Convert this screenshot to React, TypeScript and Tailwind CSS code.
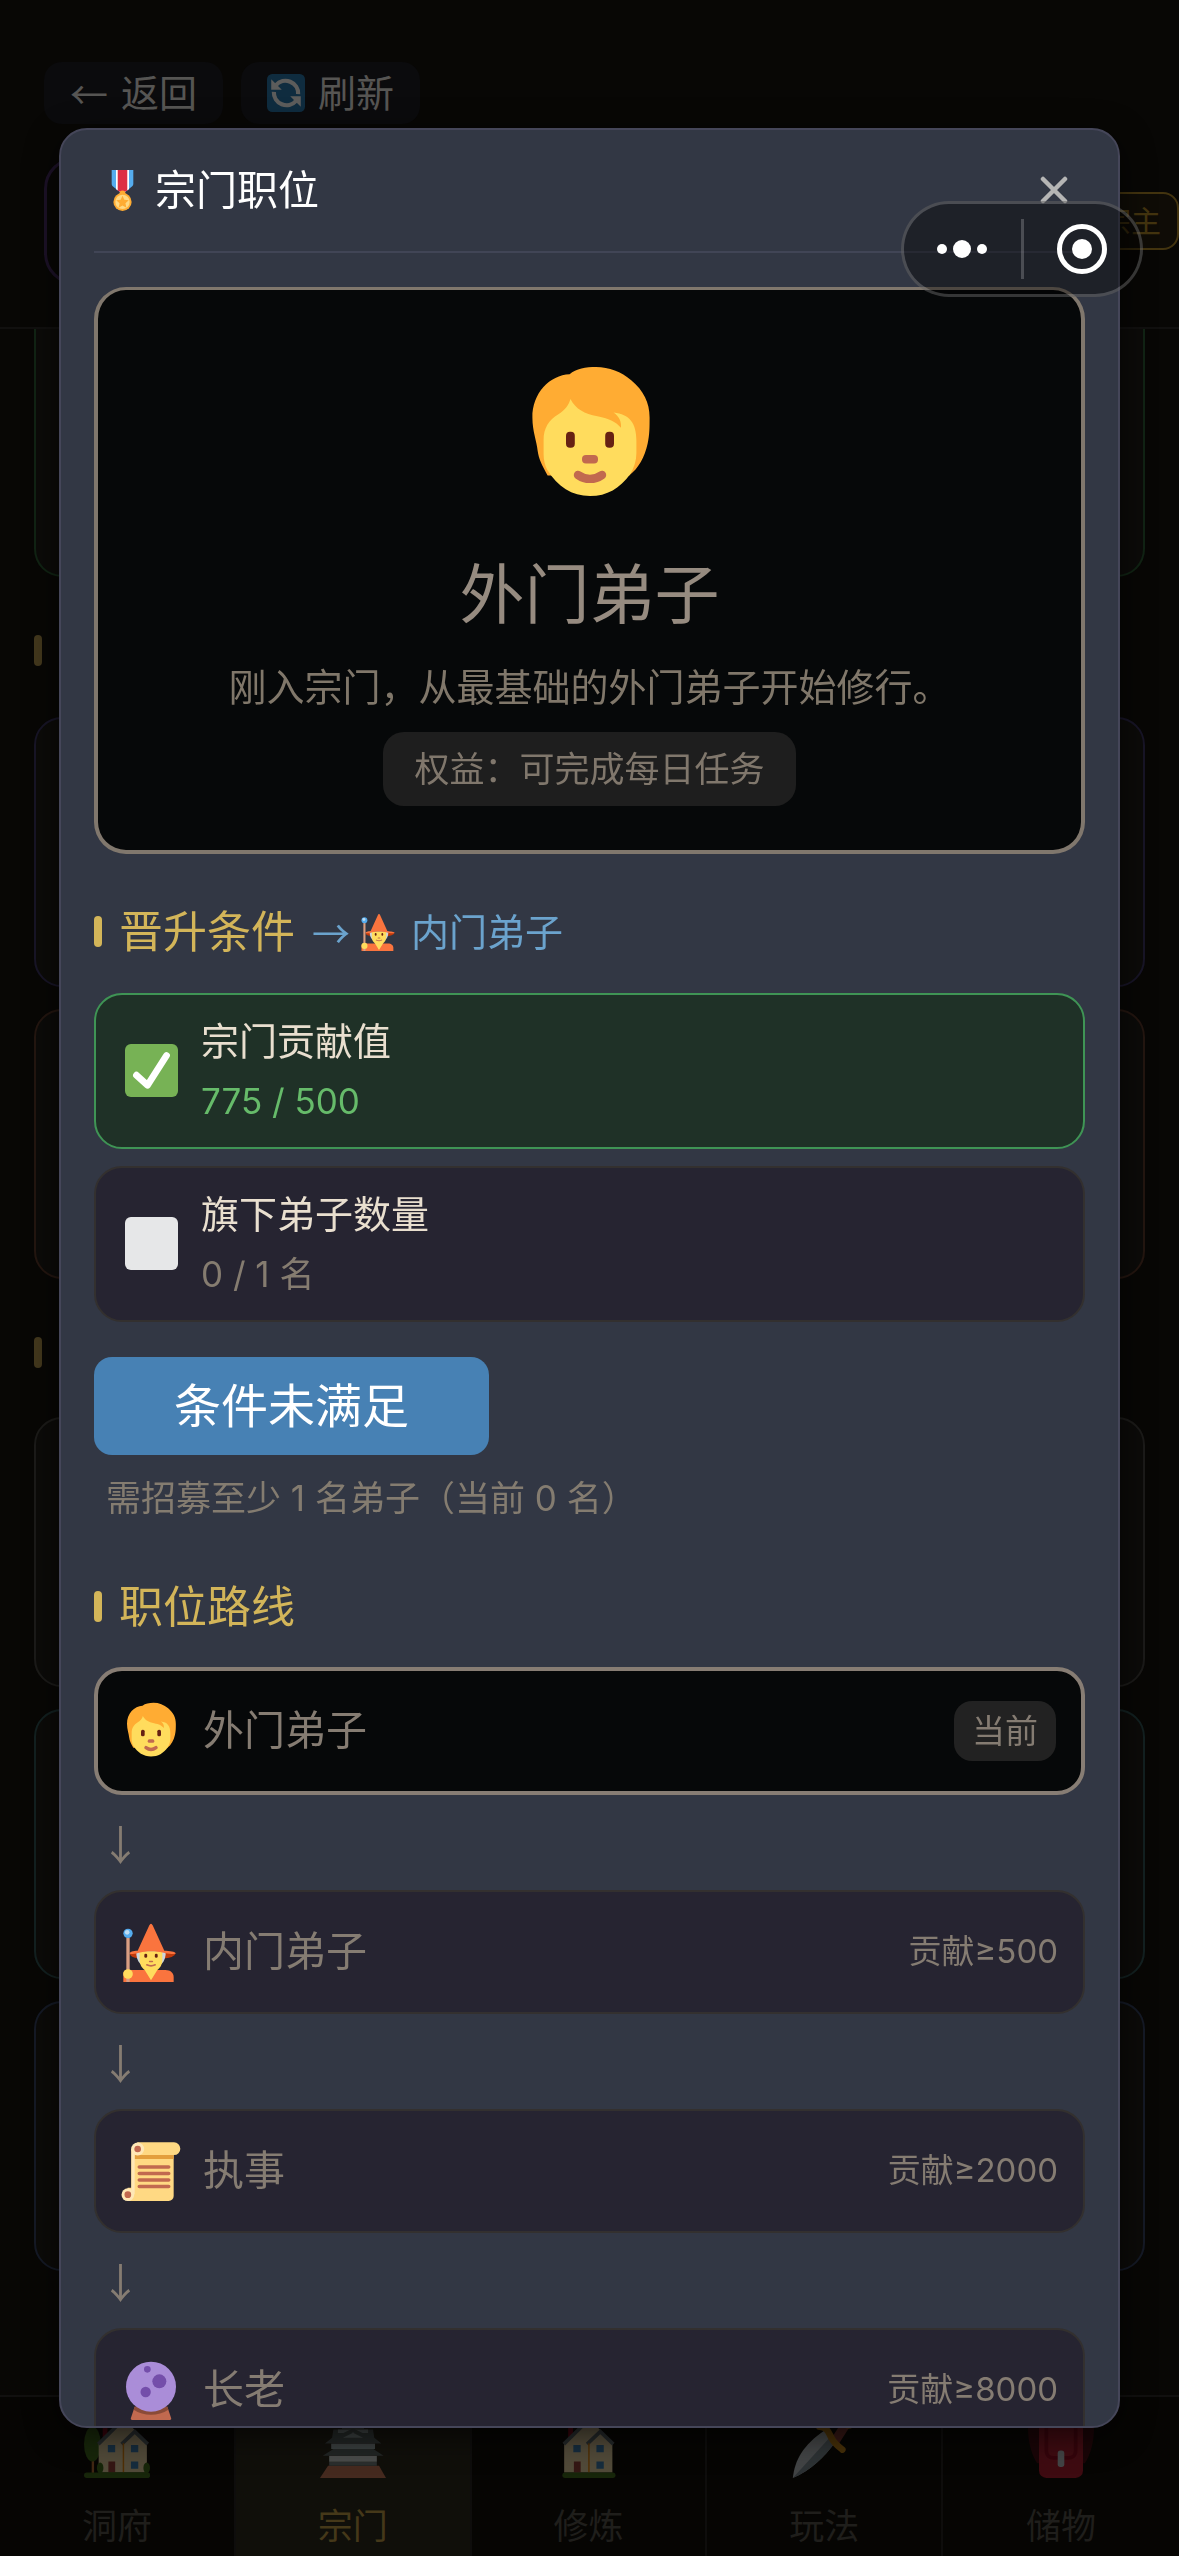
import type { ReactNode } from "react";
import clsx from "clsx";

interface IconProps {
  className?: string;
}

function Person({ className }: IconProps) {
  return (
    <svg viewBox="0 0 36 36" className={className} aria-hidden="true">
      <path
        fill="#FFAC33"
        d="M12.900 2.800C14.500 1.400 17 1 19.500 1c3.300 0 6.300 1.200 8.800 3.300 3.100 2.600 4.600 5.600 4.600 9.300 0 2.500 0 4.300-.5 6.600-.7 3.300-2.300 6.200-4.600 7.900H7.400C5.900 25.400 5.200 24 4.900 21.900c-.2-2.300-1.300-4.800-1.300-8.200C3.500 7.500 8 3 12.900 2.800z"
      />
      <path
        fill="#FFDC5D"
        d="M13.100 9c-.4 1.600-1.400 2.800-3 3.800-2.400 1.500-3.700 3.400-3.700 6.500v3.500c0 1.400.3 2.700.9 3.900C9.900 31 13.500 33.250 18 33.250c4.300 0 7.500-2 10-5.400 1-1.600 1.600-3.400 1.600-5.300v-3.100c0-4.400-1.700-6.700-5.700-7.100 1.400 1 2 2.300 1.850 3.850-1.300-1.500-2.800-2.300-5.900-2.900-3.300-.6-5.300-1.700-6.750-4.300z"
      />
      <rect x="12" y="17.200" width="2.200" height="4" rx="1" fill="#662113" />
      <rect x="21.800" y="17.200" width="2.200" height="4" rx="1" fill="#662113" />
      <rect x="16" y="23" width="4" height="2.100" rx="1" fill="#C1694F" />
      <path d="M15 28c1.800 1.300 4.200 1.300 6 0" fill="none" stroke="#C1694F" strokeWidth="2.100" strokeLinecap="round" />
    </svg>
  );
}

function Mage({ className }: IconProps) {
  return (
    <svg viewBox="0 0 36 36" className={className} aria-hidden="true">
      <path fill="#C1390B" d="M5.200 18.500c0 2.500 3 3.300 6 3.300h14c4 0 7.400-1.100 7.500-3.300z" />
      <path fill="#FA743E" d="M1.400 36v-5c0-1.300 1-2.200 2.500-2.200h22.700c3 0 5 1.700 5 4.200v3z" />
      <path fill="#CCD6DD" d="M9.200 17.500h17.600c.2 3-.6 5.800-2.300 7.500h-13c-1.700-1.700-2.500-4.500-2.300-7.500z" />
      <path fill="#FFDC5D" d="M11.200 17.500h13.600v5.300c0 3-1.500 4.800-3 6L18 35l-3.800-6.200c-1.500-1.200-3-3-3-6z" />
      <path fill="#FA743E" d="M18 1c.4 0 .8.6 1 1l7 15.200c3 .1 6.800.4 6.800 1.800-5 1-8-1.400-14.800-1.400S9 20 5.200 19c0-1.200 2-1.800 4.800-1.800L17 2c.2-.4.6-1 1-1z" />
      <rect x="14" y="19" width="1.700" height="2.500" rx=".8" fill="#662113" />
      <rect x="20.300" y="19" width="1.700" height="2.500" rx=".8" fill="#662113" />
      <path d="M17.200 23.700h1.600M15.500 25.700c1.500.7 3.500.7 5 0" fill="none" stroke="#C1694F" strokeWidth="1" strokeLinecap="round" />
      <path fill="#D99E82" d="M3.200 9.500h2V36h-2z" />
      <circle cx="4.200" cy="6.800" r="2.800" fill="#55ACEE" />
      <circle cx="3.700" cy="6.200" r="1.400" fill="#BDDDF4" />
      <circle cx="4.200" cy="31.200" r="2.900" fill="#FFDC5D" />
    </svg>
  );
}

function Scroll({ className }: IconProps) {
  return (
    <svg viewBox="0 0 36 36" className={className} aria-hidden="true">
      <path fill="#FFD983" d="M10 .8h21.800a3.800 3.800 0 0 1 0 7.600h-.2V33a3 3 0 0 1-3 3H4V28h2.200V4.800z" />
      <path fill="#E39F3D" d="M8.200 8.400h23.400v2.400H8.200z" />
      <path fill="#FFE8B6" d="M6.200 4.800h2V32h-2z" />
      <circle cx="10" cy="4.800" r="3.900" fill="#FFE8B6" />
      <circle cx="4.100" cy="32.200" r="3.800" fill="#FFE8B6" />
      <circle cx="10" cy="4.800" r="2" fill="#C1694F" />
      <circle cx="4.100" cy="32.200" r="2" fill="#C1694F" />
      <path d="M11 15.600h17.600M11 19.500h17.600M11 23.400h17.600M11 27.300h17.600" stroke="#C1694F" strokeWidth="2.200" strokeLinecap="round" />
    </svg>
  );
}

function CrystalBall({ className }: IconProps) {
  return (
    <svg viewBox="0 0 36 36" className={className} aria-hidden="true">
      <path fill="#C1694F" d="M8.200 28h19.600l2.300 7c.1.600-.2 1-.8 1H6.700c-.6 0-.9-.4-.8-1z" />
      <path fill="#8A4B38" d="M8.200 28h19.600l.6 1.800c-6 4-14.800 4-20.800 0z" />
      <circle cx="18" cy="16" r="15" fill="#AA8DD8" />
      <circle cx="15.800" cy="5.600" r="2" fill="#744EAA" />
      <circle cx="23" cy="12.800" r="4.200" fill="#744EAA" />
      <circle cx="14.800" cy="19.200" r="3.100" fill="#744EAA" />
    </svg>
  );
}

function Medal({ className }: IconProps) {
  return (
    <svg viewBox="0 0 36 36" className={className} aria-hidden="true">
      <path fill="#55ACEE" d="M8.500 0h19v12c0 1-.4 1.900-1.200 2.500L19.500 20h-3l-6.800-5.500c-.8-.6-1.200-1.500-1.200-2.500z" />
      <path fill="#FFF" d="M12.300 0h11.400v17L18 20.500 12.300 17z" />
      <path fill="#DD2E44" d="M13.800 0h8.400v18L18 20.500 13.800 18z" />
      <circle cx="18" cy="20.500" r="2.600" fill="#FFAC33" />
      <circle cx="18" cy="28" r="8" fill="#FFAC33" />
      <circle cx="18" cy="28" r="6.300" fill="#FFD983" />
      <path fill="#FFAC33" d="m18 22.500 1.600 3.600 3.900.4-2.900 2.700.8 3.900-3.400-2-3.400 2 .8-3.900-2.900-2.700 3.900-.4z" />
    </svg>
  );
}

function CheckMark({ className }: IconProps) {
  return (
    <svg viewBox="0 0 36 36" className={className} role="img" aria-label="已满足">
      <rect width="36" height="36" rx="4" fill="#77B255" />
      <path d="M7.800 21.200 15.300 28 28.200 7.800" fill="none" stroke="#FFF" strokeWidth="4.600" strokeLinecap="round" strokeLinejoin="round" />
    </svg>
  );
}

function EmptyMark({ className }: IconProps) {
  return (
    <svg viewBox="0 0 36 36" className={className} role="img" aria-label="未满足">
      <rect width="36" height="36" rx="4" fill="#E6E7E8" />
    </svg>
  );
}

function Refresh({ className }: IconProps) {
  return (
    <svg viewBox="0 0 36 36" className={className} aria-hidden="true">
      <rect width="36" height="36" rx="5" fill="#0f2c3f" />
      <path d="M8.500 10.500A12 12 0 0 1 29.500 19" fill="none" stroke="#5c5c5b" strokeWidth="4" />
      <path d="M27.500 25.500A12 12 0 0 1 6.500 17" fill="none" stroke="#5c5c5b" strokeWidth="4" />
      <path fill="#5c5c5b" d="M4 5v10h10zM32 31V21H22z" />
    </svg>
  );
}

function HouseBody() {
  return (
    <>
      <path fill="#A0041E" d="M10.200 4h2.600v10h-2.600z" />
      <path fill="#FFE8B6" d="M8 17 17 8h9l8.300 9v16H8z" />
      <path d="M7.800 17.500 18 7.500" stroke="#66757F" strokeWidth="2" />
      <path d="m20.500 17.500 7.200-6.800 7.100 6.800" fill="none" stroke="#66757F" strokeWidth="2" />
      <path d="M21.500 17v16" stroke="#F4900C" strokeWidth=".8" />
      <path fill="#3B88C3" d="M13 18h4v4h-4zM25.600 18h4v4h-4zM25.600 27h4v4h-4z" />
      <path fill="#A0413B" d="M13.300 27H17v6h-3.700z" />
      <rect x="7" y="33" width="29" height="3" rx="1.500" fill="#3E721D" />
    </>
  );
}

function HouseWithTree({ className }: IconProps) {
  return (
    <svg viewBox="0 0 36 36" className={className} aria-hidden="true">
      <path fill="#C77538" d="M4.200 24h1.300v10H4.200z" />
      <ellipse cx="4.600" cy="17.500" rx="4.600" ry="9.500" fill="#3E721D" />
      <HouseBody />
      <ellipse cx="8.800" cy="30.500" rx="1.800" ry="3" fill="#3E721D" />
      <ellipse cx="34.200" cy="30.500" rx="1.800" ry="3" fill="#3E721D" />
      <rect y="33" width="36" height="3" rx="1.500" fill="#3E721D" />
    </svg>
  );
}

function House({ className }: IconProps) {
  return (
    <svg viewBox="3 0 36 36" className={className} aria-hidden="true">
      <HouseBody />
    </svg>
  );
}

function Castle({ className }: IconProps) {
  return (
    <svg viewBox="0 0 36 36" className={className} aria-hidden="true">
      <path fill="#C1694F" d="M4.400 29.300h27.800L36 36H0z" />
      <path fill="#66757F" d="M5 27.200h26v2.100H5z" />
      <path fill="#CCD6DD" d="M5 23.900h26v3.300H5z" />
      <path fill="#4B5962" d="M7.300 20.200h21.800l5.600 3.700H1.500z" />
      <path fill="#99AAB5" d="M6.100 17.200H30v3H6.100z" />
      <path fill="#4B5962" d="M7.300 9.500h21.600l.7 4.600 3.900 3.100H2.700l3.900-3.100z" />
      <path fill="#99AAB5" d="M12 6h12v3H12zM9.800 9.500h16.400v2H9.800z" />
      <path d="m11 13.500 7-3.500 7 3.500" fill="none" stroke="#4B5962" strokeWidth="2" />
      <path fill="#99AAB5" d="m18 11.300 5.500 2.800h-11z" />
    </svg>
  );
}

function Dagger({ className }: IconProps) {
  return (
    <svg viewBox="0 0 36 36" className={className} aria-hidden="true">
      <path fill="#CCD6DD" d="M1 36c1-9.500 5.500-18 17.500-26l6 6C18 25 10.500 32 1 36z" />
      <path fill="#8899A6" d="M1 36 22 13l2.500 3C18 25 10.500 32 1 36z" />
      <path d="M24 16 31 5" stroke="#A0413B" strokeWidth="5" />
      <path d="M15.500 8c4 0 5 3 6.500 6s3.500 4.500 6 6.500" fill="none" stroke="#D99116" strokeWidth="3.600" strokeLinecap="round" />
      <circle cx="31.500" cy="6" r="3.200" fill="#D99116" />
    </svg>
  );
}

function Backpack({ className }: IconProps) {
  return (
    <svg viewBox="0 0 36 36" className={className} aria-hidden="true">
      <path fill="#4A0812" d="M0 8h36c0 9-2 15-5 20H5C2 23 0 17 0 8z" />
      <rect x="6" y="1" width="24" height="35" rx="4" fill="#BE1931" />
      <path d="M10 8v13c0 3 2 4 4 4h8c2 0 4-1 4-4V8" fill="none" stroke="#A0041E" strokeWidth="2" />
      <rect x="16.200" y="21" width="3.600" height="9" rx="1.500" fill="#CCD6DD" />
    </svg>
  );
}

const upperCards = ["border-[#181527]", "border-[#241610]"];

const lowerCards = ["border-[#1c1b19]", "border-[#132121]", "border-[#151a26]"];

const tabs = [
  { label: "洞府", Icon: HouseWithTree },
  { label: "宗门", Icon: Castle, active: true },
  { label: "修炼", Icon: House },
  { label: "玩法", Icon: Dagger },
  { label: "储物", Icon: Backpack },
];

const ranks = [
  { name: "外门弟子", Icon: Person, current: true },
  { name: "内门弟子", Icon: Mage, need: "贡献≥500" },
  { name: "执事", Icon: Scroll, need: "贡献≥2000" },
  { name: "长老", Icon: CrystalBall, need: "贡献≥8000" },
];

function CardStack({ borders }: { borders: string[] }) {
  return (
    <div className="flex shrink-0 flex-col gap-[22px]">
      {borders.map((border) => (
        <div key={border} className={clsx("h-[270px] rounded-[28px] border-2 bg-[#0c0b09]", border)} />
      ))}
    </div>
  );
}

function BackgroundPage() {
  return (
    <div className="flex h-screen flex-col">
      <header className="border-b-2 border-[#11100f] pb-[42px] pl-[44px] pt-[62px]">
        <div className="flex gap-[18px] text-[38px] leading-[62px] text-[#565553]">
          <button type="button" className="flex items-center gap-[13px] rounded-[18px] bg-[#0b0b0d] px-[26px]">
            <span className="font-['Noto_Sans_CJK_SC',sans-serif]">←</span>
            返回
          </button>
          <button type="button" className="flex items-center gap-[13px] rounded-[18px] bg-[#0b0b0d] px-[26px]">
            <Refresh className="size-[38px]" />
            刷新
          </button>
        </div>
        <div className="mt-[33px] flex h-[128px] items-center justify-between">
          <div className="size-[128px] rounded-[32px] border-3 border-[#1d1228]" />
          <span className="rounded-2xl border-2 border-[#43340f] bg-[#0f0c06] px-4 text-[30px] leading-[54px] text-[#43340f]">
            宗主
          </span>
        </div>
      </header>

      <main className="flex min-h-0 flex-1 flex-col overflow-hidden px-[34px]">
        <div className="h-[248px] shrink-0 rounded-b-[28px] border-x-2 border-b-2 border-[#112414] bg-[#0c0b09]" />
        <div className="mb-[51px] mt-[58px] h-[31px] w-2 shrink-0 rounded bg-[#43381d]" />
        <CardStack borders={upperCards} />
        <div className="mb-[49px] mt-[58px] h-[31px] w-2 shrink-0 rounded bg-[#43381d]" />
        <CardStack borders={lowerCards} />
      </main>

      <nav className="grid h-[161px] shrink-0 grid-cols-5 border-t-2 border-[#11100f] bg-[#060503]">
        {tabs.map(({ label, Icon, active }) => (
          <button
            key={label}
            type="button"
            className={clsx(
              "flex flex-col items-center border-r-2 border-[#0e0d0c] pt-[15px] text-[35px] leading-[52px] last:border-r-0",
              active ? "bg-[#100f0a] text-[#453819]" : "text-[#1f1e1b]",
            )}
          >
            <Icon className="mb-[22px] size-[66px] opacity-30" />
            {label}
          </button>
        ))}
      </nav>
    </div>
  );
}

function SectionTitle({ children }: { children: ReactNode }) {
  return (
    <div className="flex items-center">
      <span className="mr-[17px] h-[31px] w-2 rounded bg-[#d3b559]" />
      {children}
    </div>
  );
}

interface ConditionProps {
  title: string;
  progress: string;
  done?: boolean;
}

function Condition({ title, progress, done }: ConditionProps) {
  return (
    <li
      className={clsx(
        "flex items-center gap-[23px] rounded-[28px] border-2 px-[29px] py-4 leading-[60px]",
        done ? "border-[#3f9455] bg-[#1f3127]" : "border-[#33302f] bg-[#262431]",
      )}
    >
      {done ? <CheckMark className="size-[53px]" /> : <EmptyMark className="size-[53px]" />}
      <div>
        <p className="text-[38px] text-[#e9dfcf]">{title}</p>
        <p className={clsx("text-[35px]", done ? "text-[#66bb6a]" : "text-[#857c70]")}>{progress}</p>
      </div>
    </li>
  );
}

function RankModal() {
  return (
    <section
      role="dialog"
      aria-modal="true"
      aria-labelledby="rank-title"
      className="flex h-[90%] w-[90%] flex-col overflow-hidden rounded-[28px] border-2 border-[#454659] bg-[#323744] px-[33px] shadow-[0_8px_32px_rgba(0,0,0,0.6)]"
    >
      <header className="flex h-[123px] shrink-0 items-center justify-between border-b-2 border-[#414556] pl-2 pr-[17px]">
        <h1 id="rank-title" className="flex items-center gap-3 text-[41px] leading-[60px] text-white">
          <Medal className="size-[41px]" />
          宗门职位
        </h1>
        <button type="button" aria-label="关闭" className="text-[#b5b5b5]">
          <svg viewBox="0 0 28 28" className="size-7" aria-hidden="true">
            <path d="m3 3 22 22M25 3 3 25" stroke="currentColor" strokeWidth="4.500" strokeLinecap="round" />
          </svg>
        </button>
      </header>

      <div className="mt-[34px] min-h-0 flex-1 overflow-hidden">
        <div className="flex flex-col items-center rounded-[32px] border-4 border-t-3 border-[#80776d] bg-[#060809] pb-11 pt-[73px]">
          <Person className="size-[144px]" />
          <h2 className="mt-12 text-[65px] leading-[80px] text-[#968b80]">外门弟子</h2>
          <p className="mt-7 text-[38px] leading-[48px] text-[#80776a]">
            刚入宗门，从最基础的外门弟子开始修行。
          </p>
          <p className="mt-[21px] rounded-[21px] bg-[#1e1e1e] px-[31px] text-[35px] leading-[74px] text-[#80776c]">
            权益：可完成每日任务
          </p>
        </div>

        <div className="mt-12">
          <SectionTitle>
            <h2 className="text-[44px] leading-[60px] text-[#d3b559]">晋升条件</h2>
            <p className="ml-[17px] flex items-center text-[38px] leading-[60px] text-[#6ba3cd]">
              <span className="mr-2.5 font-['Noto_Sans_CJK_SC',sans-serif]">→</span>
              <Mage className="mr-[13px] size-[38px]" />
              内门弟子
            </p>
          </SectionTitle>
        </div>

        <ul className="mt-[31px] flex flex-col gap-[17px]">
          <Condition title="宗门贡献值" progress="775 / 500" done />
          <Condition title="旗下弟子数量" progress="0 / 1 名" />
        </ul>

        <button
          type="button"
          className="mt-[35px] block rounded-[18px] bg-[#4781b4] px-20 text-[47px] leading-[98px] text-white"
        >
          条件未满足
        </button>
        <p className="mt-[19px] pl-3 text-[35px] leading-[48px] text-[#847c70]">
          需招募至少 1 名弟子（当前 0 名）
        </p>

        <div className="mt-[55px]">
          <SectionTitle>
            <h2 className="text-[44px] leading-[60px] text-[#d3b559]">职位路线</h2>
          </SectionTitle>
        </div>

        <ol className="mt-[30px]">
          {ranks.map(({ name, Icon, current, need }, index) => (
            <li key={name} className="text-[#857c72]">
              {index > 0 && (
                <div className="flex h-[95px] items-center pl-1.5">
                  <span className="w-10 text-center font-['Noto_Sans_CJK_SC',sans-serif] text-[41px]">↓</span>
                </div>
              )}
              <div
                className={clsx(
                  "flex items-center rounded-[28px] pr-[25px]",
                  current
                    ? "h-[128px] border-4 border-[#877d74] bg-[#060809] pl-[23px]"
                    : "h-[124px] border-2 border-[#33302f] bg-[#262431] pl-[25px]",
                )}
              >
                <Icon className="mr-[22px] size-[60px]" />
                <span className="flex-1 text-[41px]">{name}</span>
                {current ? (
                  <span className="rounded-[18px] bg-[#222222] px-[18px] text-[33px] leading-[60px]">当前</span>
                ) : (
                  <span className="text-[33px]">{need}</span>
                )}
              </div>
            </li>
          ))}
        </ol>
      </div>
    </section>
  );
}

function Capsule() {
  return (
    <div className="fixed right-9 top-[201px] flex h-24 w-[242px] items-center rounded-full border-3 border-white/20 bg-black/40">
      <button type="button" aria-label="更多" className="flex flex-1 items-center justify-center gap-1.5">
        <span className="size-2.5 rounded-full bg-white" />
        <span className="size-[18px] rounded-full bg-white" />
        <span className="size-2.5 rounded-full bg-white" />
      </button>
      <span className="h-[60px] w-[3px] bg-white/20" />
      <button type="button" aria-label="退出" className="flex flex-1 items-center justify-center">
        <span className="flex size-[50px] items-center justify-center rounded-full border-5 border-white">
          <span className="size-5 rounded-full bg-white" />
        </span>
      </button>
    </div>
  );
}

export default function App() {
  return (
    <div className="overflow-hidden bg-[#080705] font-[Inter,'Noto_Sans_CJK_SC',sans-serif]">
      <BackgroundPage />
      <div className="fixed inset-0 flex items-center justify-center">
        <RankModal />
      </div>
      <Capsule />
    </div>
  );
}
